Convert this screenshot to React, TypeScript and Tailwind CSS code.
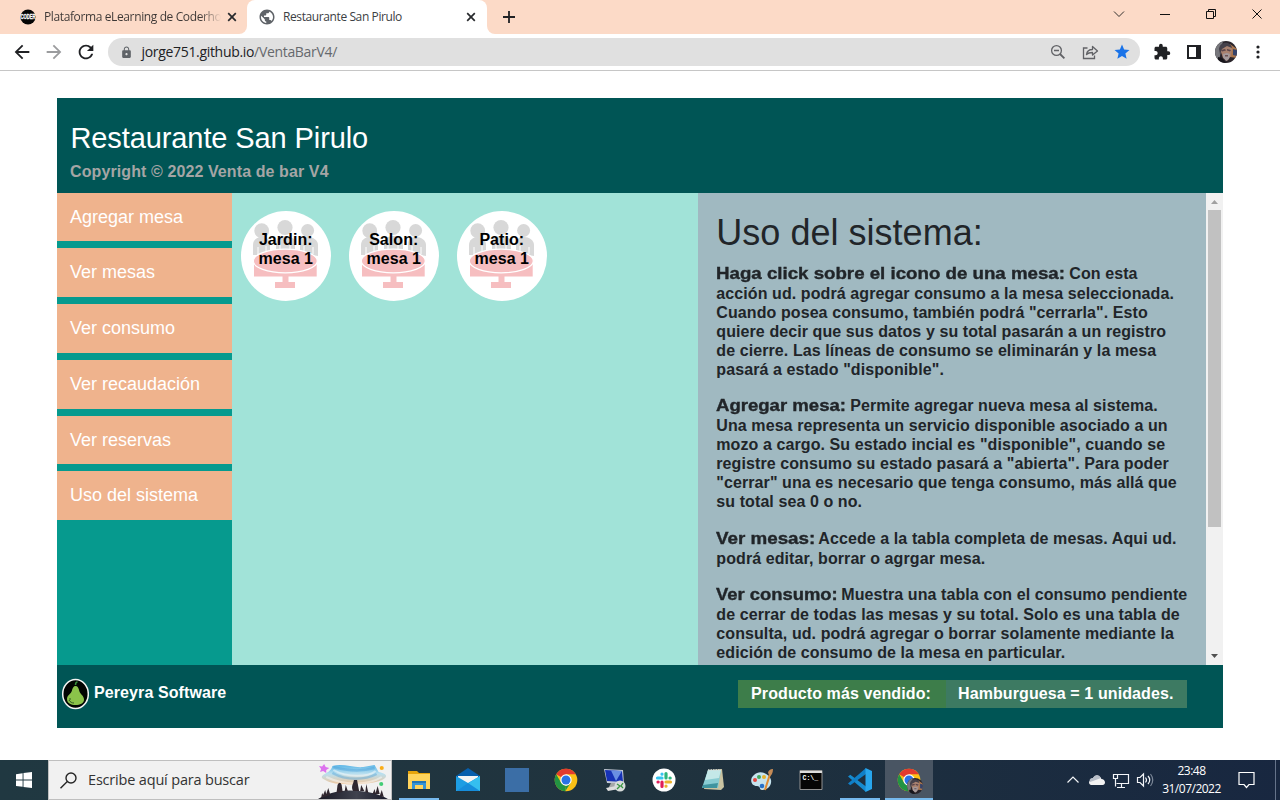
import React from "react";
import {
  MdArrowBack,
  MdArrowForward,
  MdExtension,
  MdLock,
  MdPublic,
  MdRefresh,
  MdStar,
} from "react-icons/md";

const menu = ["Agregar mesa", "Ver mesas", "Ver consumo", "Ver recaudación", "Ver reservas", "Uso del sistema"];
const tables = ["Jardin:", "Salon:", "Patio:"];

const help = [
  {
    title: "Haga click sobre el icono de una mesa:",
    width: "w-[349px]",
    stretch: "scale-x-[1.168]",
    first: "Con esta",
    rest: [
      "acción ud. podrá agregar consumo a la mesa seleccionada.",
      'Cuando posea consumo, también podrá "cerrarla". Esto',
      "quiere decir que sus datos y su total pasarán a un registro",
      "de cierre. Las líneas de consumo se eliminarán y la mesa",
      'pasará a estado "disponible".',
    ],
  },
  {
    title: "Agregar mesa:",
    width: "w-[130px]",
    stretch: "scale-x-[1.16]",
    first: "Permite agregar nueva mesa al sistema.",
    rest: [
      "Una mesa representa un servicio disponible asociado a un",
      'mozo a cargo. Su estado incial es "disponible", cuando se',
      'registre consumo su estado pasará a "abierta". Para poder',
      '"cerrar" una es necesario que tenga consumo, más allá que',
      "su total sea 0 o no.",
    ],
  },
  {
    title: "Ver mesas:",
    width: "w-[98px]",
    stretch: "scale-x-[1.175]",
    first: "Accede a la tabla completa de mesas. Aqui ud.",
    rest: ["podrá editar, borrar o agrgar mesa."],
  },
  {
    title: "Ver consumo:",
    width: "w-[121px]",
    stretch: "scale-x-[1.15]",
    first: "Muestra una tabla con el consumo pendiente",
    rest: [
      "de cerrar de todas las mesas y su total. Solo es una tabla de",
      "consulta, ud. podrá agregar o borrar solamente mediante la",
      "edición de consumo de la mesa en particular.",
    ],
  },
];

function CloseX() {
  return (
    <svg width="10" height="10" viewBox="0 0 10 10" className="shrink-0">
      <path d="M1.2 1.2l7.6 7.6M8.8 1.2L1.2 8.8" stroke="#27292c" strokeWidth="1.7" />
    </svg>
  );
}

function Face({ size }: { size: number }) {
  return (
    <svg width={size} height={size} viewBox="0 0 22 22" className="shrink-0">
      <defs>
        <clipPath id={`face${size}`}><circle cx="11" cy="11" r="11" /></clipPath>
      </defs>
      <g clipPath={`url(#face${size})`}>
        <rect width="22" height="22" fill="#29242a" />
        <path d="M0 0h8L5 15 3 22H0z" fill="#77777c" />
        <path d="M15 3l7 5v9l-7-1z" fill="#a9754c" />
        <path d="M18 8l4 1v6l-4-1z" fill="#35436a" />
        <path d="M5 8c1-5 10-6 12 0l-1 7-4 5-4-3z" fill="#a98270" />
        <path d="M4 8C5 0 16 0 17 7l-5-2-5 3-2 5z" fill="#45414a" />
        <path d="M6 9l4-1 1 1.500-4 1zm6-1l4 1-1 1.500-3-1z" fill="#5c464a" />
        <path d="M8 13l4-1 3 1-1 5-3 2-3-4z" fill="#a49a9c" />
        <path d="M10 14h3v1.500h-3z" fill="#6a5052" />
        <path d="M3 16l4 1 4 5H3z" fill="#17151b" />
      </g>
    </svg>
  );
}

function TabStrip() {
  return (
    <div className="flex h-[34px] bg-[#fcdac7]">
      <div className="flex w-[247px] bg-white">
        <div className="flex w-[247px] items-center rounded-br-lg bg-[#fcdac7] pl-[18px]">
          <svg width="20" height="16" viewBox="-2 0 20 16" className="shrink-0">
            <circle cx="8" cy="8" r="7.6" fill="#050505" />
            <text x="8" y="10.400" textAnchor="middle" fontSize="6.500" fontWeight="900" fill="#fff" stroke="#fff" strokeWidth=".3" fontFamily="Liberation Sans, sans-serif" textLength="15" lengthAdjust="spacingAndGlyphs">CODER</text>
          </svg>
          <div className="ml-[6px] w-[177px] whitespace-nowrap bg-linear-to-r from-[#3c3735] from-88% to-[#fcdac7] to-100% bg-clip-text text-[12px] tracking-[-0.38px] text-transparent">Plataforma eLearning de Coderho</div>
          <div className="ml-[6px] flex"><CloseX /></div>
        </div>
      </div>
      <div className="w-[240px] bg-[#fcdac7]">
        <div className="flex h-[34px] items-center rounded-t-lg bg-white pl-[11px]">
          <MdPublic size={18} color="#5f6368" className="shrink-0" />
          <div className="ml-[7px] w-[183px] whitespace-nowrap text-[12px] tracking-[-0.4px] text-[#3c4043]">Restaurante San Pirulo</div>
          <CloseX />
        </div>
      </div>
      <div className="flex flex-1 bg-white">
        <div className="flex flex-1 items-center rounded-bl-lg bg-[#fcdac7] pl-4">
          <svg width="12" height="12" viewBox="0 0 12 12"><path d="M6 0v12M0 6h12" stroke="#202124" strokeWidth="1.800" /></svg>
          <svg width="160" height="34" viewBox="1112 0 160 34" fill="none" stroke="#111" className="ml-auto mr-2">
            <path d="M1114 11.500l5 5 5-5" stroke="#33302e" />
            <path d="M1160 14.500h10M1206.500 11.500h7v7h-7zM1208.500 11.500v-2h7v7h-2M1252.500 9.500l9 9M1261.500 9.500l-9 9" />
          </svg>
        </div>
      </div>
    </div>
  );
}

function Toolbar() {
  return (
    <div className="flex h-[37px] items-center border-b border-[#c6c6c6] bg-white">
      <MdArrowBack size={22} color="#202124" className="ml-[11px] shrink-0" />
      <MdArrowForward size={22} color="#9b9c9e" className="ml-[10px] shrink-0" />
      <MdRefresh size={22} color="#202124" className="ml-[10px] shrink-0" />
      <div className="ml-[11px] flex h-7 w-[1032px] items-center rounded-full bg-[#e0e0e0] pl-[11.500px]">
        <MdLock size={13} color="#5f6368" className="shrink-0" />
        <div className="ml-[9px] whitespace-nowrap text-[14px] leading-5 tracking-[-0.32px] text-[#202124]">jorge751.github.io<span className="text-[#66696d]">/VentaBarV4/</span></div>
        <svg width="86" height="28" viewBox="1044 38 86 28" fill="none" stroke="#616266" strokeWidth="1.300" className="ml-auto mr-[10px] shrink-0">
          <circle cx="1056.500" cy="50.500" r="4.900" />
          <path d="M1060 54l4.400 4.400" strokeWidth="1.800" />
          <path d="M1054 50.500h5M1087.500 48h-4v10.500h11v-3" />
          <path d="M1086.500 54.500c.6-4 3-5 6-5v-3l5 4.500-5 4v-2.500c-2.500 0-4.500.4-6 2z" strokeLinejoin="round" />
          <foreignObject x="1113" y="43" width="18" height="18"><MdStar size={18} color="#1a73e8" /></foreignObject>
        </svg>
      </div>
      <MdExtension size={18} color="#202124" className="ml-[13px] shrink-0" />
      <svg width="14" height="14" viewBox="0 0 14 14" className="ml-[16px] shrink-0"><path d="M1 1h12v12H1z" fill="none" stroke="#202124" strokeWidth="2" /><path d="M9 0h5v14H9z" fill="#202124" /></svg>
      <div className="ml-[14px]"><Face size={22} /></div>
      <svg width="4" height="14" viewBox="0 0 4 14" className="ml-[19px]" fill="#202124"><circle cx="2" cy="2" r="1.600" /><circle cx="2" cy="7" r="1.600" /><circle cx="2" cy="12" r="1.600" /></svg>
    </div>
  );
}

function TableBadge({ name }: { name: string }) {
  return (
    <div className="relative h-[90px] w-[90px] overflow-hidden rounded-full bg-white">
      <svg width="90" height="90" viewBox="0 0 90 90" className="absolute inset-0">
        <g fill="#d8d8d8">
          <circle cx="20.700" cy="19.700" r="7.400" />
          <circle cx="44" cy="16.500" r="7.600" />
          <circle cx="66.600" cy="19.500" r="6.500" />
          <path d="M12 44V34c0-5 4-8 9-8s8 3 8 8v10z" />
          <path d="M35 42V32c0-5 4-7 9-7s10 2 10 7v10z" />
          <path d="M59 42v-9c0-5 3-7 8-7s10 3 10 8v11z" />
        </g>
        <path d="M17 36v8M25 35v5M39 33v6M49 33v6M63 35v6M72 36v7" stroke="#fff" strokeWidth="1" />
        <path d="M13 52h62.700v13.500H13zM41.500 65h6v6H54v6H34v-6h7.500z" fill="#f6bec0" />
        <ellipse cx="44.300" cy="50" rx="32" ry="11.800" fill="#f6bec0" stroke="#fff" strokeWidth="1.200" />
      </svg>
      <div className="relative pr-[0.500px] pt-[19px] text-center text-[16px] font-bold leading-[19px] tracking-[0.05px] text-black">{name}<br />mesa 1</div>
    </div>
  );
}

function Help() {
  return (
    <div className="flex w-[525px] bg-[#a0b9c1]">
      <div className="w-[508px] overflow-hidden pl-[18.300px] text-[#212529]">
        <h1 className="mt-[18px] h-[52px] whitespace-nowrap text-[36px] leading-[43px] tracking-[0.02px]">Uso del sistema:</h1>
        {help.map((p) => (
          <div key={p.title} className="mb-[16.350px] whitespace-nowrap text-[16px] font-bold leading-[19px] tracking-[0.09px]">
            <div className="flex h-[21px] items-center">
              <div className={`${p.width} mr-[4px] shrink-0`}>
                <span className={`${p.stretch} inline-block origin-left tracking-normal [-webkit-text-stroke:0.35px_#212529]`}>{p.title}</span>
              </div>
              <span>{p.first}</span>
            </div>
            {p.rest.map((line) => <div key={line}>{line}</div>)}
          </div>
        ))}
      </div>
      <div className="flex w-[17px] flex-col items-center bg-[#f1f1f1]">
        <svg width="17" height="17" className="shrink-0"><path d="M5 11h7L8.500 7z" fill="#a0a0a0" /></svg>
        <div className="h-[317px] w-[13px] bg-[#c1c1c1]" />
        <svg width="17" height="17" className="mt-auto shrink-0"><path d="M5 6h7l-3.500 4z" fill="#505050" /></svg>
      </div>
    </div>
  );
}

function Restaurant() {
  return (
    <div className="ml-[57px] mt-[27px] flex h-[630px] w-[1166px] flex-col font-['Liberation_Sans',Arial,sans-serif]">
      <header className="h-[95px] shrink-0 bg-[#005555] pl-[13px] pt-[22px]">
        <div className="pl-[0.500px] text-[29px] leading-[36px] tracking-[-0.1px] text-white">Restaurante San Pirulo</div>
        <div className="mt-[6px] text-[16px] font-bold leading-[19px] tracking-[0.1px] text-[#a5a5a5]">Copyright © 2022 Venta de bar V4</div>
      </header>
      <div className="flex h-[472px] shrink-0 overflow-hidden">
        <nav className="-mt-[0.300px] flex w-[175px] flex-col gap-[7.150px] bg-[#069a8e]">
          {menu.map((m) => (
            <div key={m} className="h-[48.600px] shrink-0 bg-[#efb38d] pl-[13px] text-[18px] leading-[48.200px] text-white">{m}</div>
          ))}
        </nav>
        <main className="flex w-[466px] items-start gap-[18px] bg-[#a1e3d8] pl-[9px] pt-[18px]">
          {tables.map((t) => <TableBadge key={t} name={t} />)}
        </main>
        <Help />
      </div>
      <footer className="flex h-[63px] shrink-0 items-start bg-[#005555] text-[16px] font-bold text-white">
        <svg width="28" height="32" viewBox="0 0 28 32" className="ml-[4px] mt-[13px]">
          <ellipse cx="14.500" cy="16" rx="12.800" ry="14.500" fill="#020402" stroke="#f3f5f3" strokeWidth="1.500" />
          <path d="M14.500 8c2.300 0 3.200 2 3.800 5 .6 3 4.700 4.500 4.700 8.500 0 4-4 5.500-8.500 5.500s-8.500-2-8.500-6c0-4 4-5 4.800-8 .7-3 1.700-5 3.700-5z" fill="#8bc34a" />
          <path d="M14.500 7c0-2 .5-3 2-3" stroke="#388e3c" strokeWidth="1.500" fill="none" />
          <path d="M8 22c1 2 3 3 5 3M9 20v2" stroke="#315b22" fill="none" />
        </svg>
        <div className="ml-[5px] mt-[18px] leading-[19px] tracking-[0.1px]">Pereyra Software</div>
        <div className="ml-auto mr-[36px] mt-[15px] flex h-[28px] text-center leading-[27px] tracking-[0.1px]">
          <div className="w-[208px] bg-[#3d7d4a] pr-[2px]">Producto más vendido:</div>
          <div className="w-[241px] bg-[#3d7a62] pr-[1.500px]">Hamburguesa = 1 unidades.</div>
        </div>
      </footer>
    </div>
  );
}

function ChromeLogo() {
  return (
    <>
      <circle cx="12" cy="12" r="11.300" fill="#fbc116" />
      <path d="M12 12L2.200 6.300A11.300 11.300 0 0 1 21.800 6.300H12z" fill="#e33b2e" />
      <path d="M2.200 6.300L7.100 14.800 12 18l-.8 5.300A11.300 11.300 0 0 1 2.200 6.300z" fill="#229342" />
      <path d="M11.200 23.300L16.900 14.500 12 18z" fill="#229342" />
      <circle cx="12" cy="12" r="5.700" fill="#fff" />
      <circle cx="12" cy="12" r="4.500" fill="#2a72e5" />
    </>
  );
}

const apps: { id: string; art: React.ReactNode; state?: "open" | "active" }[] = [
  {
    id: "explorer", state: "open",
    art: <><path d="M1 3h9l2 2h11v16H1z" fill="#e7a50c" /><path d="M1 6h22v15H1z" fill="#ffd45c" /><path d="M5 21v-8h14v8h-3v-4H8v4z" fill="#3594d6" /><path d="M5 13h14v2H5z" fill="#2276b4" /></>,
  },
  {
    id: "mail",
    art: <><path d="M0 8l12-8 12 8v4H0z" fill="#075eac" /><path d="M2 8h20v8H2z" fill="#f3f3f3" /><path d="M0 8l12 7 12-7v15H0z" fill="#1d9de3" /><path d="M24 8v15H0z" fill="#35bfef" /><path d="M0 23h24L12 15z" fill="#168ddb" /></>,
  },
  { id: "blue", art: <path d="M0 0h24v24H0z" fill="#3b6ea6" /> },
  { id: "chrome", art: <ChromeLogo /> },
  {
    id: "remote",
    art: <><path d="M1 1l19 1 1 14-17-1z" fill="#c3c9d6" /><path d="M2 2l17 1 1 11-16-1z" fill="#1732b5" /><path d="M8 2.500l11 .6-6 10z" fill="#6a8fe2" /><path d="M8 15h5l2 6H5z" fill="#a5a8a8" /><path d="M3 20l10-2 3 3-11 2z" fill="#dedede" /><circle cx="17" cy="18" r="5.500" fill="#d8dcdb" /><path d="M14 16l3 2-3 3M20 15l-2 3 2 2" fill="none" stroke="#3a9641" strokeWidth="1.300" /></>,
  },
  {
    id: "slack",
    art: <><circle cx="12" cy="12" r="11.500" fill="#fff" /><g strokeWidth="3.200" strokeLinecap="round"><path d="M5.500 10h4.500M10 6v.2" stroke="#36c5f0" /><path d="M14 5.500v4.500M18 10h.2" stroke="#2eb67d" /><path d="M14 14h4.500M14 18v.2" stroke="#ecb22e" /><path d="M10 14v4.500M6 14h.2" stroke="#e01e5a" /></g></>,
  },
  {
    id: "notepad",
    art: <><path d="M7 2l14-1 2 18-3 3-17-1z" fill="#c9c3a1" /><path d="M7 2h13l-3 18H1z" fill="#88ccd2" /><path d="M7 2h13l-2 8L4 12z" fill="#c4e8e8" /><path d="M2 17l15-2-1 5H1z" fill="#3f949f" /><path d="M7 2h13" stroke="#d8dedb" strokeWidth="1.500" strokeDasharray="1.500 1" /></>,
  },
  {
    id: "paint",
    art: <><path d="M4 7c6-6 16-1 17 5 1 5-3 10-9 10-3 0-1-4-5-4C1 18-1 11 4 7z" fill="#c6e3ee" /><circle cx="5" cy="12" r="2" fill="#e2463e" /><circle cx="9" cy="9" r="2" fill="#43a85b" /><circle cx="14" cy="9" r="2" fill="#e7b22c" /><circle cx="12" cy="18" r="2.300" fill="#2670c8" /><path d="M15 22L20 6" stroke="#dd8c35" strokeWidth="2" /><path d="M18 5c0-2 2-4 5-4 0 3-1 6-3 7z" fill="#c58b57" /></>,
  },
  {
    id: "terminal",
    art: <><path d="M1 2.500h22v19H1z" fill="#050505" stroke="#929292" /><path d="M1 3h22v2H1z" fill="#dedede" /><text x="3.500" y="12" fontSize="6.500" fontWeight="700" fill="#fff" fontFamily="Liberation Mono, monospace">C:\_</text></>,
  },
  {
    id: "code", state: "open",
    art: <><path d="M0 8.500L2.300 6.800 18 18.500V24z" fill="#168bd0" /><path d="M0 15.500L18 0v6L2.300 17.300z" fill="#0f7fc8" /><path d="M17.500 0L24 3v18l-6.500 3z" fill="#28a6ed" /></>,
  },
  { id: "chrome-profile", state: "active", art: <ChromeLogo /> },
];

function SearchArt() {
  return (
    <svg width="73" height="37" viewBox="0 0 71 37" preserveAspectRatio="none" className="ml-auto">
      <defs>
        <linearGradient id="sky" x2="0" y2="1"><stop stopColor="#5cb6e7" /><stop offset=".45" stopColor="#b9dfef" /><stop offset="1" stopColor="#f2c69b" /></linearGradient>
        <linearGradient id="hill" x2="1"><stop stopColor="#171722" /><stop offset=".55" stopColor="#40424e" /><stop offset="1" stopColor="#191b2b" /></linearGradient>
      </defs>
      <path d="M5 13c3-2 8-4 9-9 10-3 20 2 30 1l11-2 4 7c8 2 9 4 5 7-8 6-48 8-57 1-4-2-4-3-2-5z" fill="url(#sky)" />
      <path d="M15 5c14 4 26 5 40 1M14 11c14 8 32 7 43 1" fill="none" stroke="#3996d3" strokeWidth="2.500" opacity=".35" />
      <path d="M15 8c14 8 34 7 41 1M8 15c18 9 42 8 54 0" fill="none" stroke="#fff" strokeWidth="2" opacity=".45" />
      <path d="M6 2l1.500 3 3.500 1-3 2v3l-3-2-3 1 1-3-2-3 3 .5z" fill="#dc72ee" />
      <circle cx="62" cy="6" r="2" fill="#faad18" /><circle cx="61.500" cy="22" r="2" fill="#43cd77" />
      <path d="M0 37c8-5 17-8 31-8.500 17 0 29 4 37 8.500z" fill="url(#hill)" />
      <g fill="#30272f"><path d="M3 36l1-5 1 2 2-5 1 4 2-6 2 7zM18 31l1-8c1.500-3 3-3 4 0l1 7zM26 29l1-6 2 6zM34 29c-2-5 0-6 1-11h3l2 11zM41 29l1-6 3 6zM46 30l1-8 2 9zM53 32l2-5 1 4 2-7 2 8zM60 34l2-6 2 7z" /></g>
    </svg>
  );
}

function Taskbar() {
  return (
    <div className="mt-8 flex h-10 shrink-0 bg-linear-to-r from-[#203841] via-[#20333e] to-[#182740] text-white">
      <div className="flex w-[48px] items-center justify-center"><svg width="16" height="16" viewBox="0 0 16 16" fill="#fff"><path d="M0 2.200l6.600-1v6.300H0zM7.500 1L16 0v7.500H7.500zM0 8.500h6.600v6.300L0 13.900zM7.500 8.500H16V16l-8.500-1z" /></svg></div>
      <div className="flex w-[344px] items-center border border-[#bfbfbf] bg-[#f1f1f1] pl-[11px]">
        <svg width="17" height="17" viewBox="0 0 17 17" fill="none" stroke="#252525" strokeWidth="1.400"><circle cx="11" cy="6" r="5" /><path d="M7.300 9.600L.5 16.300" /></svg>
        <div className="ml-[11px] whitespace-nowrap text-[14.500px] tracking-[-0.18px] text-[#333]">Escribe aquí para buscar</div>
        <SearchArt />
      </div>
      <div className="ml-[2.500px] flex">
        {apps.map((a) => (
          <div key={a.id} className={a.state === "active" ? "relative flex w-[48px] items-center justify-center bg-[#495563]" : "relative flex w-[49.050px] items-center justify-center"}>
            <svg width="24" height="24" viewBox="0 0 24 24">{a.art}</svg>
            {a.state === "active" && <div className="absolute left-[22px] top-[18px]"><Face size={16} /></div>}
            {a.state && <div className={a.state === "active" ? "absolute inset-x-0 bottom-0 h-[2px] bg-[#76b9ed]" : "absolute inset-x-[4.500px] bottom-0 h-[2px] bg-[#76b9ed]"} />}
          </div>
        ))}
      </div>
      <svg width="90" height="40" viewBox="1065 0 90 40" className="ml-auto" fill="none" stroke="#f3f5f8" strokeWidth="1.200">
        <path d="M1067.500 22.500l5.500-5.500 5.500 5.500" />
        <path d="M1091 25c-3-1-2.500-5 1-5 2-6 8-5 9.500-1 4 0 5 6 1 6z" fill="#f2f2f2" stroke="none" /><path d="M1090 22c-1-2 0-4 3-4 2-4 6-4 8 0l-8 3z" fill="#b8bec8" stroke="none" />
        <path d="M1118 14.500h10.500v9h-12M1121.500 24v3M1117 27.500h8M1113.500 14.500h4v4h-4zM1115.500 18.500v8" />
        <path d="M1137.500 17.500h2.500l3.500-3.500v12l-3.500-3.500h-2.500zM1145.500 17.500q2 2.500 0 5M1148 16q3.500 4 0 8" /><path d="M1150.500 14q4.500 6 0 12" stroke="#7b8797" />
      </svg>
      <div className="ml-[4px] w-[64px] pl-[1px] pt-[2px] text-center text-[12px] leading-[18px] tracking-[-0.5px]">23:48<br />31/07/2022</div>
      <svg width="17" height="40" viewBox="0 0 17 40" className="ml-[15px] mr-[20px]" fill="none" stroke="#fff" strokeWidth="1.200"><path d="M1 12.500h15v12H11l-2.500 3-2.500-3H1z" /></svg>
      <div className="mr-[4px] w-px bg-[#65738a]" />
    </div>
  );
}

export default function App() {
  return (
    <div className="flex h-[800px] w-[1280px] flex-col overflow-hidden bg-white font-['Open_Sans',sans-serif]">
      <TabStrip />
      <Toolbar />
      <Restaurant />
      <Taskbar />
    </div>
  );
}
